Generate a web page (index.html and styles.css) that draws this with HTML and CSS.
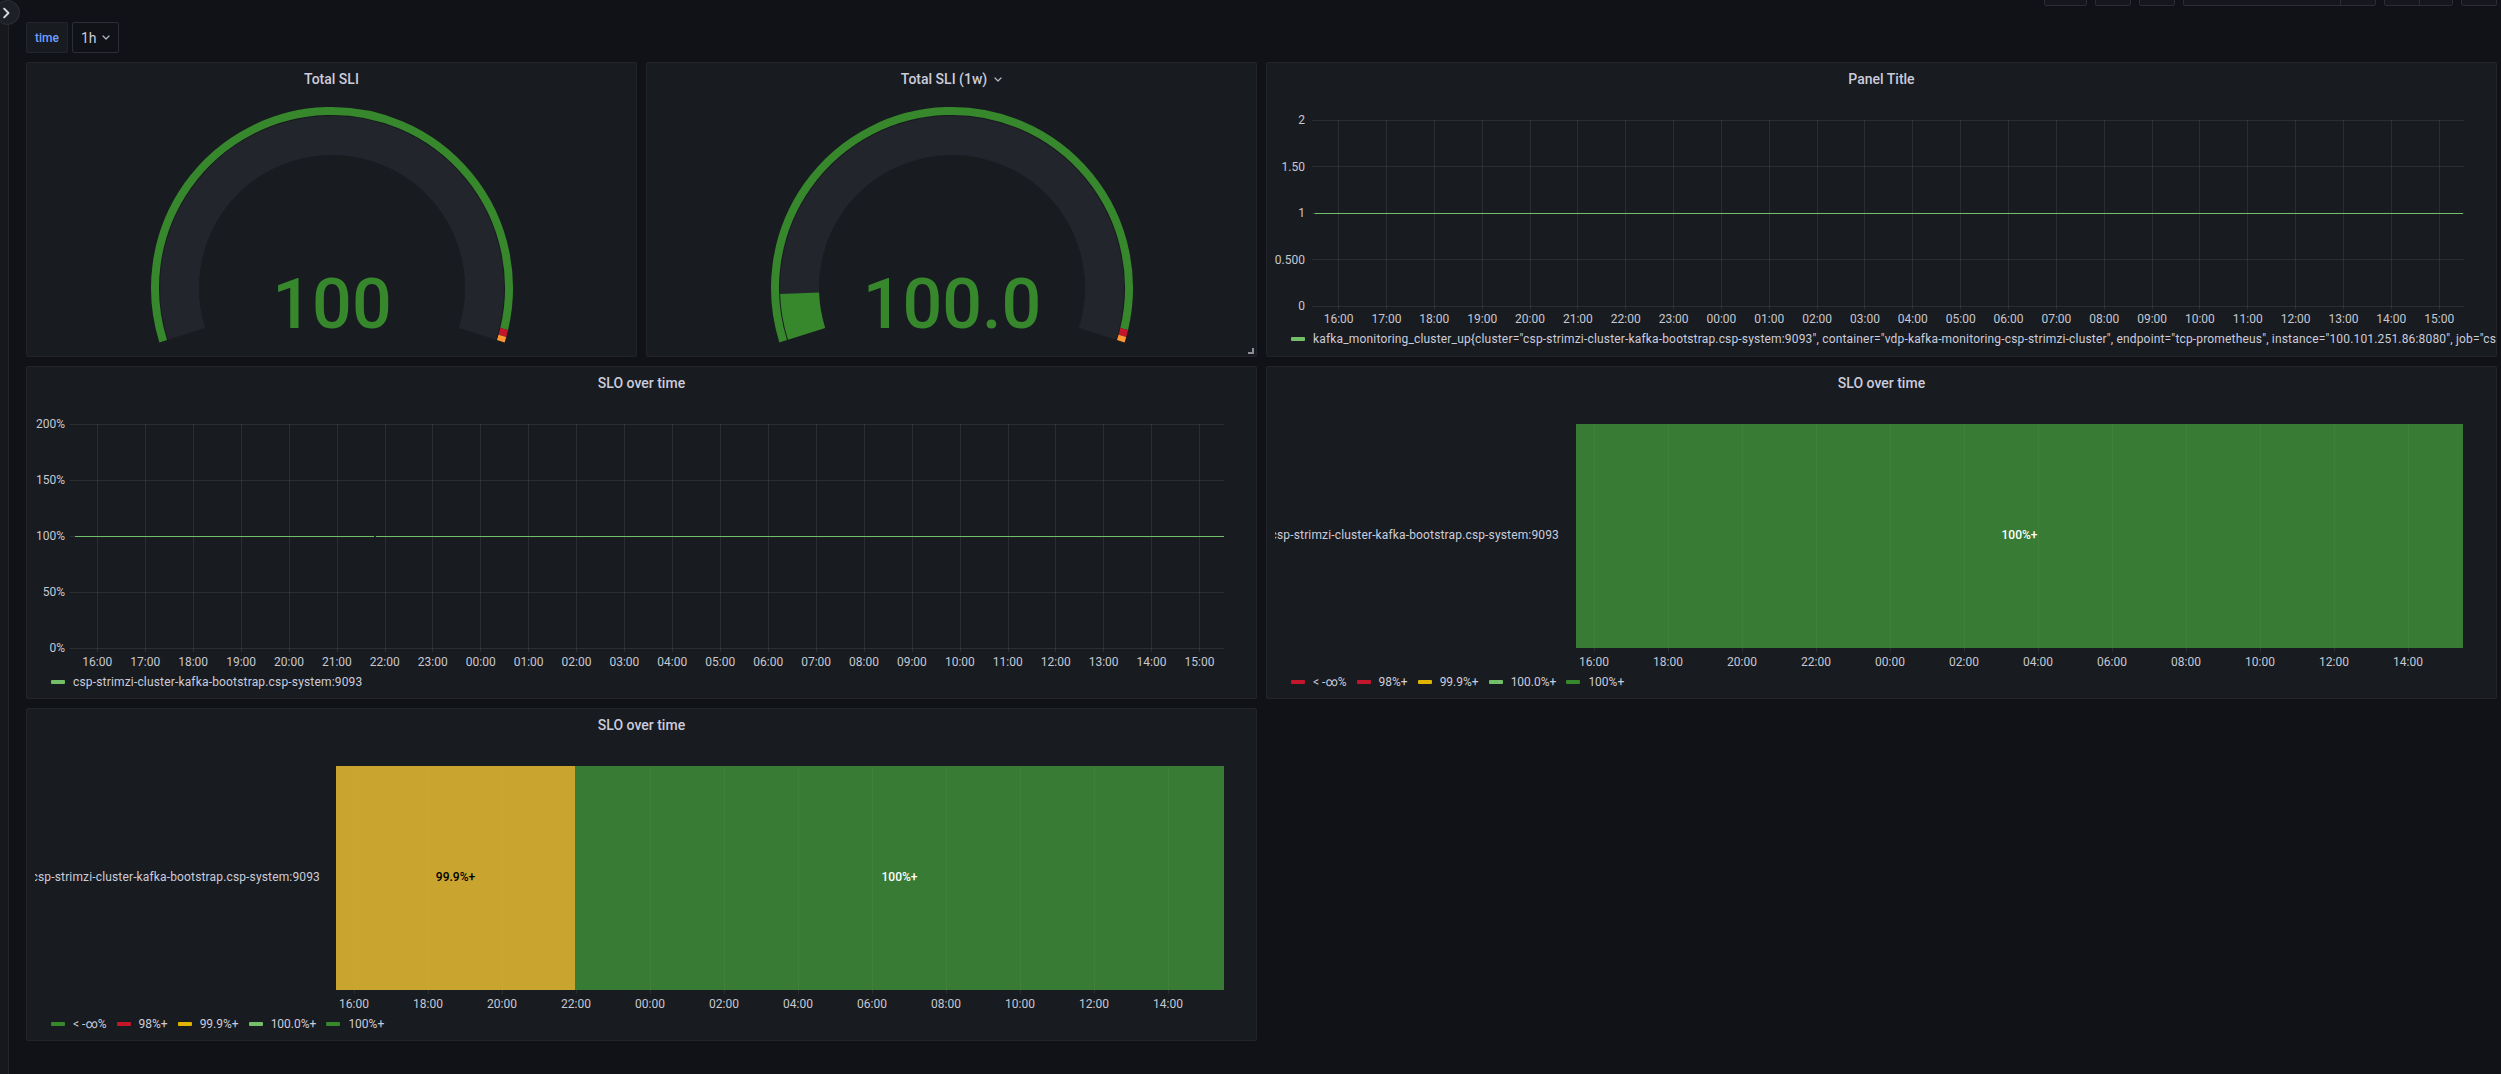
FILE: index.html
```html
<!DOCTYPE html>
<html lang="en">
<head>
<meta charset="utf-8">
<title>SLO Dashboard</title>
<link rel="stylesheet" href="styles.css">
</head>
<body>
<div class="app">
  <aside class="sidebar">
    <button class="expand" type="button" aria-label="Expand">
      <svg width="24" height="24" viewBox="0 0 24 24"><path d="M8.5 7.5 L13 12 L8.5 16.5" class="chev-stroke"/></svg>
    </button>
  </aside>
  <main class="main">
    <div class="toolbar">
      <span class="tb-btn w43"></span>
      <span class="tb-btn w36"></span>
      <span class="tb-btn w36"></span>
      <span class="tb-btn w193"><span class="seg seg-main"></span><span class="seg seg-end"></span></span>
      <span class="tb-btn w69"><span class="seg seg-half"></span><span class="seg seg-rest"></span></span>
      <span class="tb-btn w36"></span>
    </div>

    <div class="vars">
      <span class="var-label">time</span>
      <span class="var-select">1h <svg class="mini-chev" width="8" height="5" viewBox="0 0 8 5"><path d="M1 1 L4 4 L7 1"/></svg></span>
    </div>

    <div class="grid">
      <!-- Total SLI -->
      <section class="panel p-gauge1">
        <header class="panel-header"><h2 class="panel-title">Total SLI</h2></header>
        <div class="gauge-body">
          <svg class="gauge" width="609" height="261" viewBox="0 0 609 261">
            <path class="g-band" d="M159.6 238.9 A152.5 152.5 0 1 1 450.4 238.9"/>
            <path class="g-ring g-green" d="M136.2 246.2 A177 177 0 1 1 477.2 234.0"/>
            <path class="g-ring g-red" d="M477.2 234.0 A177 177 0 0 1 475.4 240.9"/>
            <path class="g-ring g-orange" d="M475.4 240.9 A177 177 0 0 1 473.8 246.2"/>
            <text class="g-value" x="305" y="233">100</text>
          </svg>
        </div>
      </section>

      <!-- Total SLI (1w) -->
      <section class="panel p-gauge2">
        <header class="panel-header"><h2 class="panel-title">Total SLI (1w)</h2><svg class="mini-chev title-chev" width="8" height="5" viewBox="0 0 8 5"><path d="M1 1 L4 4 L7 1"/></svg></header>
        <div class="gauge-body">
          <svg class="gauge" width="609" height="261" viewBox="0 0 609 261">
            <path class="g-band" d="M159.6 238.9 A152.5 152.5 0 1 1 450.4 238.9"/>
            <path class="g-band g-fill" d="M159.6 238.9 A152.5 152.5 0 0 1 152.6 198.3"/>
            <path class="g-ring g-green" d="M136.2 246.2 A177 177 0 1 1 477.2 234.0"/>
            <path class="g-ring g-red" d="M477.2 234.0 A177 177 0 0 1 475.4 240.9"/>
            <path class="g-ring g-orange" d="M475.4 240.9 A177 177 0 0 1 473.8 246.2"/>
            <text class="g-value" x="305" y="233">100.0</text>
          </svg>
        </div>
        <span class="resize-handle"></span>
      </section>

      <!-- Panel Title -->
      <section class="panel p-ts">
        <header class="panel-header"><h2 class="panel-title">Panel Title</h2></header>
        <svg class="plot" width="1229" height="234" viewBox="0 0 1229 234">
          <path class="gridline" d="M45 25.5H1197M45 71.5H1197M45 118.5H1197M45 164.5H1197M45 211.5H1197
            M71.5 25V215M119.5 25V215M167.5 25V215M215.5 25V215M263.5 25V215M310.5 25V215M358.5 25V215M406.5 25V215
            M454.5 25V215M502.5 25V215M550.5 25V215M597.5 25V215M645.5 25V215M693.5 25V215M741.5 25V215M789.5 25V215
            M837.5 25V215M885.5 25V215M932.5 25V215M980.5 25V215M1028.5 25V215M1076.5 25V215M1124.5 25V215M1172.5 25V215"/>
          <g class="ylab">
            <text x="38" y="29">2</text>
            <text x="38" y="75.5">1.50</text>
            <text x="38" y="122">1</text>
            <text x="38" y="168.5">0.500</text>
            <text x="38" y="215">0</text>
          </g>
          <g class="xlab">
            <text x="71.6" y="228">16:00</text><text x="119.5" y="228">17:00</text><text x="167.3" y="228">18:00</text><text x="215.2" y="228">19:00</text>
            <text x="263" y="228">20:00</text><text x="310.9" y="228">21:00</text><text x="358.7" y="228">22:00</text><text x="406.6" y="228">23:00</text>
            <text x="454.4" y="228">00:00</text><text x="502.3" y="228">01:00</text><text x="550.1" y="228">02:00</text><text x="598" y="228">03:00</text>
            <text x="645.8" y="228">04:00</text><text x="693.7" y="228">05:00</text><text x="741.5" y="228">06:00</text><text x="789.4" y="228">07:00</text>
            <text x="837.2" y="228">08:00</text><text x="885.1" y="228">09:00</text><text x="932.9" y="228">10:00</text><text x="980.8" y="228">11:00</text>
            <text x="1028.6" y="228">12:00</text><text x="1076.5" y="228">13:00</text><text x="1124.3" y="228">14:00</text><text x="1172.2" y="228">15:00</text>
          </g>
          <path class="series" d="M47.5 118.5H1196"/>
        </svg>
        <div class="legend clip">
          <span class="li long"><i class="sw c-lgreen"></i>kafka_monitoring_cluster_up{cluster="csp-strimzi-cluster-kafka-bootstrap.csp-system:9093", container="vdp-kafka-monitoring-csp-strimzi-cluster", endpoint="tcp-prometheus", instance="100.101.251.86:8080", job="csp-kafka-monitoring", namespace="csp-system", pod="vdp-kafka-monitoring-csp-strimzi-cluster-6d8f9c7b5-x2kqz", service="vdp-kafka-monitoring-csp-strimzi-cluster"}</span>
        </div>
      </section>

      <!-- SLO over time (line) -->
      <section class="panel p-slo-line">
        <header class="panel-header"><h2 class="panel-title">SLO over time</h2></header>
        <svg class="plot" width="1229" height="273" viewBox="0 0 1229 273">
          <path class="gridline" d="M43 25.5H1197M43 81.5H1197M43 137.5H1197M43 193.5H1197M43 249.5H1197
            M70.5 25V253M118.5 25V253M166.5 25V253M214.5 25V253M262.5 25V253M310.5 25V253M358.5 25V253M405.5 25V253
            M453.5 25V253M501.5 25V253M549.5 25V253M597.5 25V253M645.5 25V253M693.5 25V253M741.5 25V253M789.5 25V253
            M837.5 25V253M885.5 25V253M933.5 25V253M981.5 25V253M1028.5 25V253M1076.5 25V253M1124.5 25V253M1172.5 25V253"/>
          <g class="ylab">
            <text x="38" y="28.5">200%</text>
            <text x="38" y="84.5">150%</text>
            <text x="38" y="140.5">100%</text>
            <text x="38" y="196.5">50%</text>
            <text x="38" y="252.5">0%</text>
          </g>
          <g class="xlab">
            <text x="70.3" y="267">16:00</text><text x="118.2" y="267">17:00</text><text x="166.1" y="267">18:00</text><text x="214.1" y="267">19:00</text>
            <text x="262" y="267">20:00</text><text x="309.9" y="267">21:00</text><text x="357.8" y="267">22:00</text><text x="405.7" y="267">23:00</text>
            <text x="453.7" y="267">00:00</text><text x="501.6" y="267">01:00</text><text x="549.5" y="267">02:00</text><text x="597.4" y="267">03:00</text>
            <text x="645.3" y="267">04:00</text><text x="693.3" y="267">05:00</text><text x="741.2" y="267">06:00</text><text x="789.1" y="267">07:00</text>
            <text x="837" y="267">08:00</text><text x="884.9" y="267">09:00</text><text x="932.9" y="267">10:00</text><text x="980.8" y="267">11:00</text>
            <text x="1028.7" y="267">12:00</text><text x="1076.6" y="267">13:00</text><text x="1124.5" y="267">14:00</text><text x="1172.5" y="267">15:00</text>
          </g>
          <path class="series" d="M48 137.5H347M349 137.5H1197"/>
        </svg>
        <div class="legend">
          <span class="li long"><i class="sw c-lgreen"></i>csp-strimzi-cluster-kafka-bootstrap.csp-system:9093</span>
        </div>
      </section>

      <!-- SLO over time (state timeline, 100%) -->
      <section class="panel p-slo-state1">
        <header class="panel-header"><h2 class="panel-title">SLO over time</h2></header>
        <svg class="plot" width="1229" height="273" viewBox="0 0 1229 273">
          <defs><clipPath id="lblclip1"><rect x="8" y="0" width="292" height="273"/></clipPath></defs>
          <text class="row-label" x="292" y="140" clip-path="url(#lblclip1)">csp-strimzi-cluster-kafka-bootstrap.csp-system:9093</text>
          <rect class="st-green" x="309" y="25" width="887" height="224"/>
          <path class="st-grid" d="M327.5 25V249M401.5 25V249M475.5 25V249M549.5 25V249M623.5 25V249M697.5 25V249M771.5 25V249M845.5 25V249M919.5 25V249M993.5 25V249M1067.5 25V249M1141.5 25V249"/>
          <path class="gridline" d="M327.5 249V253M401.5 249V253M475.5 249V253M549.5 249V253M623.5 249V253M697.5 249V253M771.5 249V253M845.5 249V253M919.5 249V253M993.5 249V253M1067.5 249V253M1141.5 249V253"/>
          <text class="st-text light" x="752.5" y="140">100%+</text>
          <g class="xlab">
            <text x="327" y="267">16:00</text><text x="401" y="267">18:00</text><text x="475" y="267">20:00</text><text x="549" y="267">22:00</text>
            <text x="623" y="267">00:00</text><text x="697" y="267">02:00</text><text x="771" y="267">04:00</text><text x="845" y="267">06:00</text>
            <text x="919" y="267">08:00</text><text x="993" y="267">10:00</text><text x="1067" y="267">12:00</text><text x="1141" y="267">14:00</text>
          </g>
        </svg>
        <div class="legend">
          <span class="li"><i class="sw c-red"></i>&lt; -∞%</span>
          <span class="li"><i class="sw c-red"></i>98%+</span>
          <span class="li"><i class="sw c-yellow"></i>99.9%+</span>
          <span class="li"><i class="sw c-lgreen"></i>100.0%+</span>
          <span class="li"><i class="sw c-green"></i>100%+</span>
        </div>
      </section>

      <!-- SLO over time (state timeline, 99.9 / 100) -->
      <section class="panel p-slo-state2">
        <header class="panel-header"><h2 class="panel-title">SLO over time</h2></header>
        <svg class="plot" width="1229" height="273" viewBox="0 0 1229 273">
          <defs><clipPath id="lblclip2"><rect x="8" y="0" width="292" height="273"/></clipPath></defs>
          <text class="row-label" x="293" y="140" clip-path="url(#lblclip2)">csp-strimzi-cluster-kafka-bootstrap.csp-system:9093</text>
          <rect class="st-yellow" x="309" y="25" width="239" height="224"/>
          <rect class="st-green" x="548" y="25" width="649" height="224"/>
          <path class="st-grid" d="M327.5 25V249M401.5 25V249M475.5 25V249M623.5 25V249M697.5 25V249M771.5 25V249M845.5 25V249M919.5 25V249M993.5 25V249M1067.5 25V249M1141.5 25V249"/>
          <path class="gridline" d="M327.5 249V253M401.5 249V253M475.5 249V253M549.5 249V253M623.5 249V253M697.5 249V253M771.5 249V253M845.5 249V253M919.5 249V253M993.5 249V253M1067.5 249V253M1141.5 249V253"/>
          <text class="st-text dark" x="428.5" y="140">99.9%+</text>
          <text class="st-text light" x="872.5" y="140">100%+</text>
          <g class="xlab">
            <text x="327" y="267">16:00</text><text x="401" y="267">18:00</text><text x="475" y="267">20:00</text><text x="549" y="267">22:00</text>
            <text x="623" y="267">00:00</text><text x="697" y="267">02:00</text><text x="771" y="267">04:00</text><text x="845" y="267">06:00</text>
            <text x="919" y="267">08:00</text><text x="993" y="267">10:00</text><text x="1067" y="267">12:00</text><text x="1141" y="267">14:00</text>
          </g>
        </svg>
        <div class="legend">
          <span class="li"><i class="sw c-green"></i>&lt; -∞%</span>
          <span class="li"><i class="sw c-red"></i>98%+</span>
          <span class="li"><i class="sw c-yellow"></i>99.9%+</span>
          <span class="li"><i class="sw c-lgreen"></i>100.0%+</span>
          <span class="li"><i class="sw c-green"></i>100%+</span>
        </div>
      </section>
    </div>
  </main>
</div>
</body>
</html>
```

FILE: styles.css
```css
* { box-sizing: border-box; }

html, body {
  margin: 0;
  padding: 0;
  width: 100%;
  height: 100%;
  overflow: hidden;
  background: #111217;
  font-family: Roboto, "Liberation Sans", Arial, sans-serif;
  color: #ccccdc;
}

.app {
  display: flex;
  width: 100%;
  height: 100%;
}

/* left collapsed sidebar */
.sidebar {
  position: relative;
  flex: 0 0 9px;
  width: 9px;
  height: 100%;
  background: #16181d;
  border-right: 1px solid #23252b;
}

.expand {
  position: absolute;
  left: -5px;
  top: 0;
  width: 25px;
  height: 25px;
  padding: 0;
  border-radius: 50%;
  border: 1px solid #2c2f36;
  background: #1d2025;
  display: flex;
  align-items: center;
  justify-content: center;
  z-index: 2;
}

.chev-stroke {
  fill: none;
  stroke: #d8d9e3;
  stroke-width: 2;
  stroke-linecap: round;
  stroke-linejoin: round;
}

.main {
  flex: 1;
  min-width: 0;
  padding: 0 4px 0 17px;
}

/* top toolbar (only bottom edge visible) */
.toolbar {
  height: 6px;
  overflow: hidden;
  display: flex;
  justify-content: flex-end;
  align-items: flex-end;
  gap: 8px;
}

.tb-btn {
  flex: 0 0 auto;
  height: 32px;
  border: 1px solid #2a2d34;
  border-radius: 2px;
  background: #15171c;
  display: flex;
}
.w43 { width: 43px; }
.w36 { width: 36px; }
.w193 { width: 193px; }
.w69 { width: 69px; }
.seg { height: 100%; }
.seg-main { width: 157px; border-right: 1px solid #2a2d34; }
.seg-end { flex: 1; }
.seg-half { width: 35px; border-right: 1px solid #2a2d34; }
.seg-rest { flex: 1; }

/* variables row */
.vars {
  margin-top: 16px;
  height: 31px;
  display: flex;
  gap: 4px;
}

.var-label {
  display: flex;
  align-items: center;
  padding: 0 8px;
  background: #181b1f;
  border: 1px solid #22252b;
  border-radius: 2px;
  color: #6e9fff;
  font-size: 12px;
  font-weight: 500;
}

.var-select {
  display: flex;
  align-items: center;
  gap: 5px;
  padding: 0 8px 0 8px;
  background: #111217;
  border: 1px solid #2b2e35;
  border-radius: 2px;
  color: #ccccdc;
  font-size: 14px;
}

.mini-chev path {
  fill: none;
  stroke: #b8b9c4;
  stroke-width: 1.2;
  stroke-linecap: round;
  stroke-linejoin: round;
}

/* dashboard grid */
.grid {
  margin-top: 9px;
  display: grid;
  grid-template-columns: repeat(4, 1fr);
  grid-template-rows: 295px 333px 333px;
  gap: 9px;
}

.panel {
  position: relative;
  background: #181b1f;
  border: 1px solid #222429;
  border-radius: 2px;
  display: flex;
  flex-direction: column;
  overflow: hidden;
  min-width: 0;
}

.p-gauge1 { grid-column: 1; grid-row: 1; }
.p-gauge2 { grid-column: 2; grid-row: 1; }
.p-ts { grid-column: 3 / span 2; grid-row: 1; }
.p-slo-line { grid-column: 1 / span 2; grid-row: 2; }
.p-slo-state1 { grid-column: 3 / span 2; grid-row: 2; }
.p-slo-state2 { grid-column: 1 / span 2; grid-row: 3; }

.panel-header {
  flex: 0 0 32px;
  height: 32px;
  display: flex;
  align-items: center;
  justify-content: center;
  gap: 7px;
}

.panel-title {
  margin: 0;
  font-size: 14px;
  font-weight: 500;
  color: #ccccdc;
  white-space: nowrap;
}

.title-chev { margin-top: 1px; }

/* gauges */
.gauge-body {
  flex: 1;
  display: flex;
  justify-content: center;
}

.gauge { display: block; }

.g-band {
  fill: none;
  stroke: #22252b;
  stroke-width: 39;
}
.g-fill { stroke: #37872d; }

.g-ring {
  fill: none;
  stroke-width: 8;
}
.g-green { stroke: #37872d; }
.g-red { stroke: #c4162a; }
.g-orange { stroke: #ff9830; }

.g-value {
  fill: #37872d;
  font-size: 70px;
  font-weight: 500;
  text-anchor: middle;
  font-family: Roboto, "Liberation Sans", Arial, sans-serif;
}

.resize-handle {
  position: absolute;
  right: 2px;
  bottom: 2px;
  width: 6px;
  height: 6px;
  border-right: 2px solid #8e8e99;
  border-bottom: 2px solid #8e8e99;
}

/* charts */
.plot {
  display: block;
  flex: 0 0 auto;
  font-family: Roboto, "Liberation Sans", Arial, sans-serif;
}

.gridline {
  fill: none;
  stroke: rgba(204, 204, 220, 0.1);
  stroke-width: 1;
}

.st-grid {
  fill: none;
  stroke: rgba(255, 255, 255, 0.035);
  stroke-width: 1;
}

.series {
  fill: none;
  stroke: #73bf69;
  stroke-width: 1;
}

.ylab text {
  fill: #c7c8d2;
  font-size: 12px;
  text-anchor: end;
}

.xlab text {
  fill: #c7c8d2;
  font-size: 12px;
  text-anchor: middle;
}

.row-label {
  fill: #ccccdc;
  font-size: 12px;
  letter-spacing: 0.15px;
  text-anchor: end;
}

.st-green { fill: #377b34; }
.st-yellow { fill: #c9a42e; }

.st-text {
  font-size: 12px;
  font-weight: 500;
  text-anchor: middle;
}
.st-text.light { fill: #ffffff; }
.st-text.dark { fill: #000000; }

/* legends */
.legend {
  flex: 0 0 20px;
  height: 20px;
  display: flex;
  align-items: center;
  gap: 10px;
  padding: 0 7px 0 24px;
  font-size: 12px;
  color: #ccccdc;
  white-space: nowrap;
  overflow: hidden;
}

.li {
  display: flex;
  align-items: center;
  white-space: nowrap;
}

.li.long { letter-spacing: 0.17px; }

.sw {
  display: inline-block;
  width: 14px;
  height: 4px;
  border-radius: 1px;
  margin-right: 8px;
  flex: 0 0 auto;
}

.c-red { background: #c4162a; }
.c-yellow { background: #e0b400; }
.c-lgreen { background: #73bf69; }
.c-green { background: #37872d; }
```
